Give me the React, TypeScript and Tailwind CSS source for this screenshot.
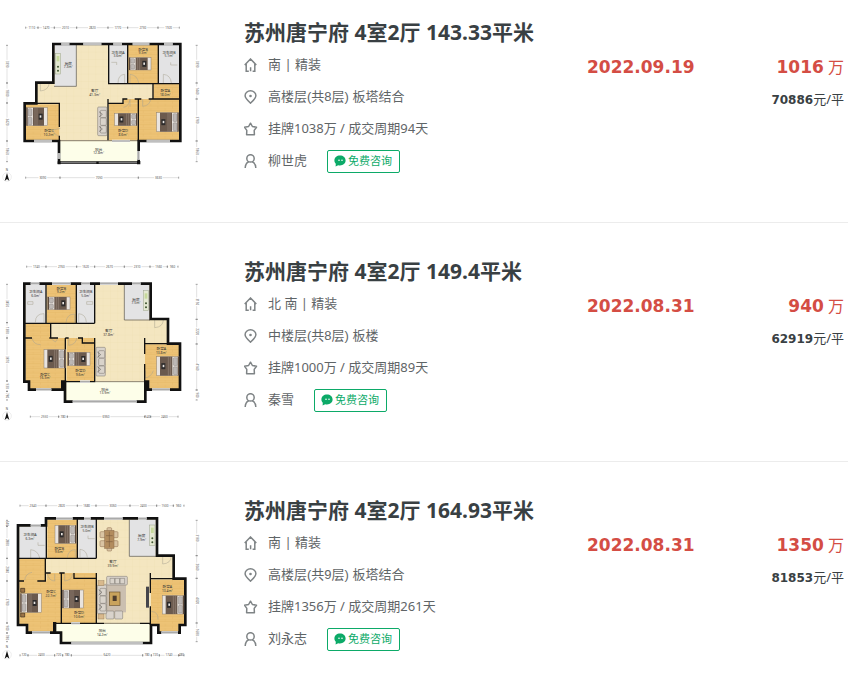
import { ReactNode } from "react";

type Rect = [number, number, number, number];

interface PlanData {
  outline: string;
  wood: Rect[];
  grey: Rect[];
  balcony: string;
  walls: string;
  thin: string;
  windows: string;
  doors: string;
  beds: { box: Rect; head: "left" | "right" }[];
  labels: [number, number, string, string][];
  top: number[];
  topY: number;
  bottom: number[];
  bottomY: number;
  left: number[];
  right: number[];
  extra: ReactNode;
}

interface Listing {
  title: string;
  facing: string;
  floor: string;
  deal: string;
  agent: string;
  date: string;
  total: string;
  unit: string;
  plan: PlanData;
}

const Sofa = ({ x, y }: { x: number; y: number }) => (
  <g stroke="#77706a" strokeWidth="1.5" fill="#d9d3cb">
    <rect x={x} y={y} width="28" height="86" rx="3" />
    <rect x={x + 8} y={y + 10} width="18" height="22" rx="3" />
    <rect x={x + 8} y={y + 33} width="18" height="22" rx="3" />
    <rect x={x + 8} y={y + 56} width="18" height="22" rx="3" />
    <path d={`M${x + 4} ${y + 14}l10 8-10 8M${x + 4} ${y + 58}l10 8-10 8`} fill="none" stroke="#4f4a46" />
  </g>
);

const Stove = ({ x, y, h }: { x: number; y: number; h: number }) => (
  <g>
    <rect x={x} y={y} width="16" height={h} fill="#e4e8d2" stroke="#99a28a" strokeWidth="1.5" />
    <rect x={x + 4} y={y + 8} width="8" height="16" fill="#c6d99b" />
    <circle cx={x + 8} cy={y + h - 22} r="3" fill="#3f5530" />
    <circle cx={x + 8} cy={y + h - 10} r="3" fill="#3f5530" />
  </g>
);

const Bed = ({ box, head }: { box: Rect; head: "left" | "right" }) => {
  const [x, y, w, h] = box;
  const flip = head === "right" ? `translate(${2 * x + w} 0) scale(-1 1)` : undefined;
  return (
    <g transform={flip}>
      <rect x={x} y={y} width={w} height={h} fill="#e9e4df" stroke="#8b8178" strokeWidth="1.5" />
      <rect x={x} y={y} width="4" height={h} fill="#5d4a3b" />
      <rect x={x + 5} y={y + 3} width="12" height={h / 2 - 5} rx="3" fill="#bdb8b5" stroke="#716b68" />
      <rect x={x + 5} y={y + h / 2 + 2} width="12" height={h / 2 - 5} rx="3" fill="#bdb8b5" stroke="#716b68" />
      <rect x={x + 20} y={y} width={w - 30} height={h} fill="#6b5a4e" />
      <path d={`M${x + 26} ${y}v${h}M${x + 32} ${y}v${h}`} stroke="#a39386" strokeWidth="1.5" />
      <rect x={x + w - 26} y={y + h / 2 - 9} width="12" height="18" fill="#2c2a2b" />
      <rect x={x + w - 23} y={y + h / 2 - 4} width="5" height="7" fill="#e8e4e0" />
    </g>
  );
};

const Dimensions = ({ stops, at, vertical }: { stops: number[]; at: number; vertical?: boolean }) => (
  <g transform={vertical ? `translate(${at} 0) rotate(90)` : `translate(0 ${at})`}>
    {stops.slice(1).map((end, i) => {
      const start = stops[i];
      const mid = (start + end) / 2;
      const gap = Math.min(13, (end - start) / 2 - 3);
      return (
        <g key={end}>
          <path d={`M${start} 0H${mid - gap}M${mid + gap} 0H${end}`} stroke="#c4c4c4" strokeWidth="1.5" />
          <path d={`M${start} -3v6M${end} -3v6`} stroke="#777" strokeWidth="2" />
          <text x={mid} y="3" textAnchor="middle" fontSize="9" fill="#555">
            {Math.round((end - start) * 3) * 10}
          </text>
        </g>
      );
    })}
  </g>
);

const FloorPlan = ({ plan }: { plan: PlanData }) => (
  <svg viewBox="0 3 630 570" className="h-[190px] w-[210px] font-['Noto_Sans','Noto_Sans_CJK_SC',sans-serif]" role="img" aria-label="户型图">
    <defs>
      <pattern id="wood" width="44" height="14" patternUnits="userSpaceOnUse">
        <rect width="44" height="14" fill="#edc376" />
        <path d="M0 0H44M0 7H44M12 0v7M34 7v7" stroke="#e0b161" strokeWidth="1" />
      </pattern>
      <pattern id="tile" width="22" height="22" patternUnits="userSpaceOnUse">
        <rect width="22" height="22" fill="#f4e6c0" />
        <path d="M0 0H22M0 0V22" stroke="#eddcb0" strokeWidth="1.5" />
      </pattern>
    </defs>
    <path d={plan.outline} fill="url(#tile)" />
    {plan.wood.map(([x, y, w, h]) => (
      <rect key={`${x}-${y}`} x={x} y={y} width={w} height={h} fill="url(#wood)" />
    ))}
    {plan.grey.map(([x, y, w, h]) => (
      <rect key={`${x}-${y}`} x={x} y={y} width={w} height={h} fill="#e3e3e4" />
    ))}
    <path d={plan.balcony} fill="#fdfee9" />
    <path d={plan.doors} fill="none" stroke="#a9a290" strokeWidth="1.5" />
    <path d={plan.thin} fill="none" stroke="#55504a" strokeWidth="2" />
    <path d={plan.walls} fill="none" stroke="#111" strokeWidth="4" />
    <path d={plan.outline} fill="none" stroke="#111" strokeWidth="8" />
    <path d={plan.windows} fill="none" stroke="#fff" strokeWidth="8" />
    <path d={plan.windows} fill="none" stroke="#aaa" strokeWidth="5" />
    {plan.extra}
    {plan.beds.map((bed) => (
      <Bed key={bed.box.join()} {...bed} />
    ))}
    {plan.labels.map(([x, y, name, area]) => (
      <g key={`${x}-${y}`} textAnchor="middle" fill="#333">
        <text x={x} y={y} fontSize="11">{name}</text>
        <text x={x} y={y + 11} fontSize="10">{area}</text>
      </g>
    ))}
    <Dimensions stops={plan.top} at={plan.topY} />
    <Dimensions stops={plan.bottom} at={plan.bottomY} />
    <Dimensions stops={plan.left} at={21} vertical />
    <Dimensions stops={plan.right} at={590} vertical />
    <circle cx="21" cy={plan.bottomY - 2} r="13" fill="none" stroke="#ddd" strokeWidth="1.5" />
    <path d={`M21 ${plan.bottomY - 14}l7 24-7-6-7 6z`} fill="#111" />
    <text x="21" y={plan.bottomY - 21} textAnchor="middle" fontSize="9" fill="#444">N</text>
  </svg>
);

const planA: PlanData = {
  outline: "M160 87H541V378H416V443H177V378H74V265H109V203H160Z",
  wood: [[384, 90, 90, 116], [460, 206, 80, 46], [416, 252, 124, 124], [327, 265, 89, 111], [370, 252, 46, 13], [77, 268, 101, 108]],
  grey: [[164, 90, 65, 124], [327, 90, 55, 116], [476, 90, 63, 116]],
  balcony: "M179 379H414V441H179Z",
  walls: "M326 88V206M383 88V206M475 88V206M324 206H541M459 206V252M324 252V376M324 265H369V252H382M404 252H424M446 252H541M415 252V376M109 265H178V336M178 362V378",
  thin: "M229 90V214H162M178 377H414",
  windows: "M184 87h24M250 87h54M340 87h26M398 87h50M492 87h26M102 378h54M336 378h54M440 378h70M177 415v16M416 408v26",
  doors: "M121 206v22q25-2 27-25M354 204q0-25 20-26v26M390 204v-26q22 2 26 26M490 204v-26q22 2 24 26M390 275v-22q-3 22-20 24M428 252v22q22-2 24-22M181 340l-22 5q5 16 20 19M334 142h16v8M512 142v8h20",
  beds: [
    { box: [387, 128, 66, 37], head: "left" },
    { box: [79, 278, 63, 54], head: "left" },
    { box: [344, 295, 68, 37], head: "right" },
    { box: [470, 293, 66, 57], head: "right" },
  ],
  labels: [
    [205, 149, "厨房", "7.3m²"], [354, 116, "卫生间A", "3.6m²"], [429, 107, "卧室B", "9.3m²"],
    [507, 116, "卫生间B", "5.1m²"], [284, 231, "客厅", "41.3m²"], [496, 231, "卧室A", "18.0m²"],
    [147, 351, "卧室C", "10.2m²"], [369, 351, "卧室D", "8.6m²"], [296, 407, "阳台", "12.8m²"],
  ],
  top: [77, 114, 163, 230, 324, 383, 474, 538],
  topY: 38,
  bottom: [77, 180, 415, 536],
  bottomY: 488,
  left: [91, 204, 264, 378, 440],
  right: [91, 204, 252, 378, 440],
  extra: (
    <>
      <Sofa x={293} y={276} />
      <Stove x={166} y={115} h={62} />
      <path d="M177 443H416" stroke="#777" strokeWidth="5" />
      <path d="M173 439h9v9h-9zM289 440h7v7h-7zM411 438h10v10h-10z" fill="#111" />
    </>
  ),
};

const planB: PlanData = {
  outline: "M73 89H452V195H504V269H540V407H444V383H436V443H195V383H187V407H87V383H73Z",
  wood: [[140, 93, 89, 115], [77, 208, 75, 44], [77, 252, 119, 130], [90, 380, 95, 24], [200, 252, 84, 129], [435, 271, 102, 112], [448, 381, 89, 24]],
  grey: [[77, 93, 61, 115], [231, 93, 52, 115], [373, 93, 75, 104]],
  balcony: "M199 384H432V441H199Z",
  walls: "M138 90V208M229 90V208M284 90V208M74 208H284M152 208V252M74 252H96M148 252H174M196 252V383M196 252H206M234 252H247V267H284M284 252V383M196 383H286M434 252V300M434 330V383M434 269H540",
  thin: "M373 93V198H450M286 383H434",
  windows: "M92 89h26M156 89h56M244 89h26M300 89h54M396 89h26M108 407h46M218 443h192M456 407h54M240 383h30",
  doors: "M106 205q0-26 26-26v26M198 206q2-26 26-26v26M236 205v-26q22 2 23 26M464 198v23q25-2 26-23M96 252q4 20 26 20M172 252q-2 22-20 0M206 252v22q22-2 24-22M436 350v22q18-4 24-22M83 143h16v8h-16zM260 143h18v8h-18z",
  beds: [
    { box: [143, 129, 67, 38], head: "left" },
    { box: [132, 287, 64, 55], head: "right" },
    { box: [203, 295, 67, 40], head: "left" },
    { box: [470, 308, 67, 57], head: "right" },
  ],
  labels: [
    [107, 118, "卫生间A", "6.0m²"], [184, 107, "卧室B", "9.2m²"], [257, 118, "卫生间B", "5.0m²"],
    [408, 140, "厨房", "7.5m²"], [326, 234, "客厅", "37.8m²"], [135, 365, "卧室C", "16.3m²"],
    [241, 354, "卧室D", "9.6m²"], [484, 288, "卧室A", "13.8m²"], [315, 410, "阳台", "13.9m²"],
  ],
  top: [80, 138, 230, 284, 373, 450, 502, 534],
  topY: 38,
  bottom: [91, 176, 202, 434, 452, 534],
  bottomY: 488,
  left: [91, 206, 252, 381, 412, 438],
  right: [91, 196, 270, 408, 438],
  extra: (
    <>
      <Sofa x={288} y={280} />
      <Stove x={430} y={110} h={60} />
    </>
  ),
};

const planC: PlanData = {
  outline: "M54 97H138V76H471V188H521V257H556V396H539V419H475V396H453V450H183V419H165V391H163V419H81V396H54Z",
  wood: [[142, 80, 89, 116], [58, 196, 78, 68], [58, 262, 126, 131], [85, 390, 76, 26], [186, 240, 104, 150], [140, 240, 44, 24], [453, 260, 100, 133], [479, 390, 57, 26]],
  grey: [[58, 101, 80, 95], [235, 80, 53, 116], [388, 80, 79, 110]],
  balcony: "M168 393H449V447H187V416H168Z",
  walls: "M139 78V196M232 78V196M289 78V196M54 196H289M136 196V264M54 264H72M112 264H138M136 240H152M178 240H194M184 240V391M222 240V256H289M289 240V391M163 391H312M451 240V300M451 340V396M420 391H453M451 257H556",
  thin: "M388 80V190H472M312 391H420",
  windows: "M92 97h30M168 76h50M252 76h20M312 76h56M414 76h26M96 419h54M214 450h214M484 419h50M214 391h26",
  doors: "M92 195v-25q22 2 27 25M202 194q2-24 24-24v24M240 193v-24q20 2 22 24M488 190v23q25-2 26-23M74 262q2-20 22-24M142 242q5 22 22 22v-22M194 242v22q22-2 24-22M454 355q22 2 20 25M114 148v9h20M264 128v9h20",
  beds: [
    { box: [165, 97, 64, 54], head: "right" },
    { box: [61, 302, 63, 56], head: "left" },
    { box: [187, 291, 63, 54], head: "left" },
    { box: [487, 308, 65, 55], head: "right" },
  ],
  labels: [
    [90, 129, "卫生间A", "6.3m²"], [178, 170, "卧室B", "9.6m²"], [261, 106, "卫生间B", "5.0m²"],
    [425, 132, "厨房", "7.9m²"], [339, 210, "客厅", "39.9m²"], [153, 300, "卧室C", "22.7m²"],
    [237, 363, "卧室D", "10.6m²"], [502, 286, "卧室A", "13.4m²"], [307, 418, "阳台", "14.2m²"],
  ],
  top: [60, 138, 232, 288, 390, 470, 520, 552],
  topY: 38,
  bottom: [60, 84, 164, 188, 214, 428, 454, 478, 536, 552],
  bottomY: 487,
  left: [82, 100, 196, 264, 390, 420, 446],
  right: [82, 188, 256, 390, 446],
  extra: (
    <>
      <g stroke="#8a6b4a" strokeWidth="1.5" fill="#d9c4a3">
        <rect x="300" y="116" width="54" height="18" rx="3" />
        <rect x="300" y="143" width="54" height="18" rx="3" />
        <rect x="321" y="104" width="14" height="70" rx="3" />
        <rect x="314" y="112" width="28" height="54" fill="#b28c5e" />
        <path d="M318 128h20M318 146h20M328 116v46" stroke="#705238" />
      </g>
      <rect x="314" y="272" width="64" height="86" fill="#cbbfb0" />
      <g stroke="#77706a" strokeWidth="1.5" fill="#d9d3cb">
        <rect x="320" y="250" width="62" height="26" rx="3" />
        <path d="M330 256h14v16h-14zM345 256h14v16h-14zM360 256h14v16h-14z" />
        <rect x="318" y="354" width="24" height="24" rx="3" />
        <rect x="344" y="354" width="24" height="24" rx="3" />
      </g>
      <Sofa x={292} y={276} />
      <rect x="294" y="263" width="18" height="15" fill="#d8b98d" stroke="#7c6142" />
      <rect x="294" y="363" width="18" height="15" fill="#d8b98d" stroke="#7c6142" />
      <rect x="328" y="297" width="32" height="40" fill="#c9a35c" stroke="#6d5430" strokeWidth="2" />
      <path d="M338 308h12v16h-12z" fill="#4e3d2d" />
      <rect x="438" y="281" width="9" height="63" fill="#45454b" />
      <path d="M62 286h12v12h-12zM62 360h12v12h-12z" fill="#9b7447" stroke="#3b2d20" strokeWidth="2" />
      <Stove x={449} y={96} h={62} />
    </>
  ),
};

const listings: Listing[] = [
  {
    title: "苏州唐宁府 4室2厅 143.33平米",
    facing: "南 | 精装",
    floor: "高楼层(共8层) 板塔结合",
    deal: "挂牌1038万 / 成交周期94天",
    agent: "柳世虎",
    date: "2022.09.19",
    total: "1016",
    unit: "70886",
    plan: planA,
  },
  {
    title: "苏州唐宁府 4室2厅 149.4平米",
    facing: "北 南 | 精装",
    floor: "中楼层(共8层) 板楼",
    deal: "挂牌1000万 / 成交周期89天",
    agent: "秦雪",
    date: "2022.08.31",
    total: "940",
    unit: "62919",
    plan: planB,
  },
  {
    title: "苏州唐宁府 4室2厅 164.93平米",
    facing: "南 | 精装",
    floor: "高楼层(共9层) 板塔结合",
    deal: "挂牌1356万 / 成交周期261天",
    agent: "刘永志",
    date: "2022.08.31",
    total: "1350",
    unit: "81853",
    plan: planC,
  },
];

const Icon = ({ children }: { children: ReactNode }) => (
  <svg viewBox="0 0 14 14" className="size-3.5 shrink-0" fill="none" stroke="#7f8486" strokeWidth="1.5" aria-hidden="true">
    {children}
  </svg>
);

const HouseIcon = () => (
  <Icon>
    <path d="M.7 7 6.500 1l5.800 6M2.200 6v7.200h2.600M10.800 6v7.200H8.600M6.600 13.200V9.200" />
  </Icon>
);

const PinIcon = () => (
  <Icon>
    <path d="M6.500 13.200C3.500 10.400 1.100 8.200 1.100 5.800a5.400 5 0 0 1 10.800 0c0 2.400-2.400 4.600-5.400 7.400Z" />
    <circle cx="6.500" cy="6" r="1.300" fill="#7f8486" stroke="none" />
  </Icon>
);

const StarIcon = () => (
  <Icon>
    <path d="m6.500 1.200 1.900 3.300 4.100.7-2.300 3.200.2 4.300H2.600l.2-4.300L.5 5.200l4.100-.7Z" strokeLinejoin="round" />
  </Icon>
);

const PersonIcon = () => (
  <Icon>
    <circle cx="6.500" cy="4.400" r="3.700" />
    <path d="M1.200 14c.1-3.200 1.400-5.300 3.500-6.300M11.800 14c-.1-3.200-1.400-5.300-3.500-6.300" />
  </Icon>
);

const ChatIcon = () => (
  <svg viewBox="0 0 12 12" className="size-3" aria-hidden="true">
    <path d="M6 .6c3.200 0 5.600 2.100 5.600 4.900S9.200 10.400 6 10.400c-.6 0-1.200-.1-1.800-.2l-2.600 1.200.2-2.600C.9 7.900.4 6.800.4 5.500.4 2.700 2.800.6 6 .6Z" fill="#0caa68" />
    <circle cx="5" cy="5.200" r=".8" fill="#fff" />
    <circle cx="8" cy="5.200" r=".8" fill="#fff" />
  </svg>
);

const ListingRow = ({ item }: { item: Listing }) => (
  <li className="grid grid-cols-[244px_1fr_261px] border-b border-[#ececec] pt-8 pb-4 first:pt-4 last:border-b-0">
    <FloorPlan plan={item.plan} />
    <div className="pt-px text-[13px] text-[#5f6567]">
      <h2 className="flex h-8 items-center text-[21px] font-bold whitespace-nowrap text-[#394043]">{item.title}</h2>
      <p className="flex h-8 items-center gap-2.5">
        <HouseIcon />
        {item.facing}
      </p>
      <p className="flex h-8 items-center gap-2.5 font-['Liberation_Sans','Noto_Sans_CJK_SC',sans-serif]">
        <PinIcon />
        {item.floor}
      </p>
      <p className="flex h-8 items-center gap-2.5">
        <StarIcon />
        {item.deal}
      </p>
      <div className="flex h-8 items-center gap-2.5">
        <PersonIcon />
        {item.agent}
        <button type="button" className="ml-2.5 flex h-[23px] items-center gap-0.5 rounded-xs border border-[#0caa68] pr-[7px] pl-1.5 text-[11px] text-[#0caa68]">
          <ChatIcon />
          免费咨询
        </button>
      </div>
    </div>
    <div className="flex justify-between pt-[35px] pr-1">
      <p className="font-['DejaVu_Sans',sans-serif] text-[17px] leading-8 font-bold text-[#d44d44]">{item.date}</p>
      <div className="text-right">
        <p className="text-base leading-8 text-[#d44d44]">
          <span className="font-['DejaVu_Sans',sans-serif] text-[17px] font-bold">{item.total}</span> 万
        </p>
        <p className="text-[13px] leading-8 text-[#394043]">
          <span className="font-['DejaVu_Sans',sans-serif] text-xs leading-8 font-bold">{item.unit}</span>元/平
        </p>
      </div>
    </div>
  </li>
);

const App = () => {
  return (
    <main className="min-h-screen bg-white pr-5 font-['Noto_Sans','Noto_Sans_CJK_SC',sans-serif]">
      <ul>
        {listings.map((item) => (
          <ListingRow key={item.title} item={item} />
        ))}
      </ul>
    </main>
  );
};

export default App;
